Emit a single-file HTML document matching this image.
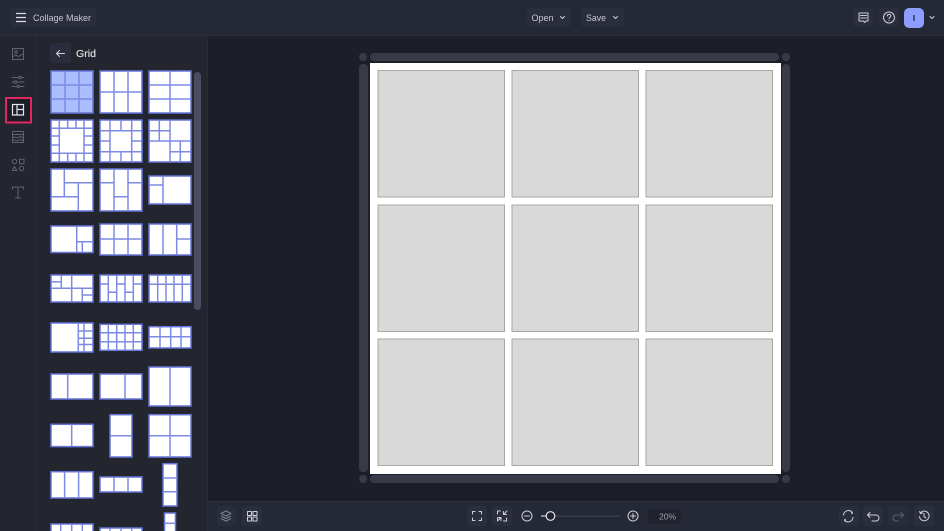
<!DOCTYPE html>
<html><head><meta charset="utf-8"><style>
html,body{margin:0;padding:0;width:944px;height:531px;overflow:hidden;background:#1d1e29}
svg{position:absolute;left:0;top:0;display:block}
text{font-family:"Liberation Sans",sans-serif}
.t rect{fill:#fff;stroke:#6674d8;stroke-width:1.5}
.t path{fill:none;stroke:#7d8ae2;stroke-width:1.5}
.i{fill:none;stroke:#5f6272;stroke-width:1;stroke-linecap:round;stroke-linejoin:round}
.w{fill:none;stroke:#cfd1d8;stroke-width:1;stroke-linecap:round;stroke-linejoin:round}
</style></head><body>
<svg width="944" height="531" viewBox="0 0 944 531">
<!-- backgrounds -->
<rect x="0" y="0" width="944" height="531" fill="#1d1e29"/>
<rect x="0" y="36" width="207" height="495" fill="#23262f"/>
<rect x="35" y="36" width="1" height="495" fill="#2a2d38"/>
<rect x="207" y="36" width="1" height="495" fill="#292c37"/>
<rect x="0" y="0" width="944" height="36" fill="#252835"/>
<rect x="0" y="35" width="944" height="1" fill="#2a2d3a"/>
<rect x="208" y="501" width="736" height="30" fill="#252835"/>
<rect x="208" y="501" width="736" height="1" fill="#32353f"/>

<!-- top bar -->
<rect x="10" y="8" width="86" height="19" rx="3" fill="#2a2d3b"/>
<path d="M16 13.500h10M16 17.500h10M16 21.500h10" fill="none" stroke="#dcdee4" stroke-width="1.200"/>
<text x="33" y="21" font-size="9.500" fill="#c6c8cf" textLength="58" lengthAdjust="spacingAndGlyphs">Collage Maker</text>
<rect x="527" y="8" width="44" height="19" rx="3" fill="#2a2d3b"/>
<text x="531.500" y="21" font-size="9.500" fill="#c6c8cf" textLength="22" lengthAdjust="spacingAndGlyphs">Open</text>
<path d="M560.500 16.500l2 2 2-2" class="w"/>
<rect x="581" y="8" width="43" height="19" rx="3" fill="#2a2d3b"/>
<text x="586" y="21" font-size="9.500" fill="#c6c8cf" textLength="20" lengthAdjust="spacingAndGlyphs">Save</text>
<path d="M613.500 16.500l2 2 2-2" class="w"/>
<rect x="853" y="8" width="20" height="19" rx="3" fill="#2a2d3b"/>
<path d="M859 13h9v8h-2l-1.500 1.500-1-1.500h-4.500zM860.500 15.500h6M860.500 18h6" class="w"/>
<rect x="879" y="8" width="20" height="19" rx="3" fill="#2a2d3b"/>
<circle cx="889" cy="17.500" r="5.500" class="w"/>
<path d="M887.300 16c0-2.200 3.500-2.200 3.500 0 0 1.300-1.800 1.300-1.800 2.700M889 20.500v.1" class="w"/>
<rect x="904" y="8" width="20" height="20" rx="5" fill="#8c9eff"/>
<rect x="913.400" y="15" width="1.200" height="6" fill="#1d2030"/>
<path d="M930 16.500l2 2 2-2" class="w"/>

<!-- sidebar icons -->
<g class="i">
<rect x="12.500" y="48.500" width="11" height="11"/>
<circle cx="16" cy="52" r="1.200"/><path d="M12.500 57l3-2 3 1.500 5-3"/>
<path d="M12 77.500h12M12 82h12M12 86.500h12"/><circle cx="20" cy="77.500" r="1.300" fill="#23262f"/><circle cx="15.500" cy="82" r="1.300" fill="#23262f"/><circle cx="18.500" cy="86.500" r="1.300" fill="#23262f"/>
<rect x="12.500" y="131.500" width="11" height="11"/><path d="M12.500 134.500h11M12.500 137.500c2-1.500 4 1 5.500 0s3-1 5.500 0M12.500 140.500c2-1.500 4 1 5.500 0s3-1 5.500 0"/>
<circle cx="14.500" cy="161.500" r="2.200"/><rect x="19.500" y="159.300" width="4.500" height="4.500"/><path d="M14.500 166.500l2.300 4h-4.600z"/><circle cx="21.500" cy="168.500" r="2.200"/>
<path d="M12.500 189v-2h11v2M18 187v11M15.500 198h5"/>
</g>
<rect x="6" y="98" width="25" height="24.500" fill="#1c1d27" stroke="#e2265f" stroke-width="2"/>
<path d="M12.500 104.500h11v10.500h-11zM17 104.500v10.500M17 109.500h6.500" fill="none" stroke="#e4e6ec" stroke-width="1.200"/>

<!-- panel header -->
<rect x="50" y="43" width="21" height="20" rx="3" fill="#2a2d3b"/>
<path d="M56.500 53.500h8M59.500 50.500l-3 3 3 3" class="w"/>
<text x="76" y="57" font-size="10.500" fill="#dcdee4" stroke="#dcdee4" stroke-width="0.200" textLength="20" lengthAdjust="spacingAndGlyphs">Grid</text>
<rect x="194" y="72" width="7" height="238" rx="3.500" fill="#4a4d60"/>

<!-- tiles -->
<g class="t">
<rect x="51" y="71" width="42" height="42" style="fill:#a9bdff"/><path d="M65 71v42M79 71v42M51 85h42M51 99h42"/>
<rect x="100" y="71" width="42" height="42"/><path d="M114 71v42M128 71v42M100 92h42"/>
<rect x="149" y="71" width="42" height="42"/><path d="M170 71v42M149 85h42M149 99h42"/>

<rect x="51" y="120" width="42" height="42"/><path d="M59.300 120v42M84 120v42M67.700 120v8.300M76 120v8.300M67.700 153.300v8.700M76 153.300v8.700M51 128.300h42M51 153.300h42M51 136h8.300M51 145h8.300M84 136h9M84 145h9"/>
<rect x="100" y="120" width="42" height="42"/><path d="M110 120v42M121 120v10.700M131.700 120v42M121 151.700v10.300M100 130.700h42M100 151.700h42M100 141h10M131.700 141h10.300"/>
<rect x="149" y="120" width="42" height="42"/><path d="M159.300 120v21M170 120v42M149 130.700h21M149 141h42M180.300 141v21M170 151.700h21"/>

<rect x="51" y="169" width="42" height="42"/><path d="M64.300 169v27.700M64.300 182.700h28.700M78.300 182.700v28.300M51 196.700h27.300"/>
<rect x="100" y="169" width="42" height="42"/><path d="M114 169v42M128 169v42M100 182.700h14M114 196.700h14M128 182.700h14"/>
<rect x="149" y="176" width="42" height="28"/><path d="M163 176v28M149 185h14"/>

<rect x="51" y="226" width="42" height="26.500"/><path d="M76.700 226v26.500M76.700 241.700h16.300M82.300 241.700v10.800"/>
<rect x="100" y="224" width="42" height="31"/><path d="M114 224v31M128 224v31M100 239h42"/>
<rect x="149" y="224" width="42" height="31"/><path d="M163 224v31M176.700 224v31M176.700 239h14.300"/>

<rect x="51" y="275" width="42" height="27"/><path d="M61.300 275v13.300M71.700 275v27M51 281.700h10.300M51 288.300h42M82.300 288.300v13.700M82.300 295h10.700"/>
<rect x="100" y="275" width="42" height="27"/><path d="M108.300 275v27M116.700 275v27M125 275v27M133.300 275v27M100 284h8.300M108.300 292.300h8.400M125 292.300h8.300M133.300 284h8.700M116.700 284h8.300"/>
<rect x="149" y="275" width="42" height="27"/><path d="M157.700 275v27M166 275v27M174 275v27M182.300 275v27M149 284.300h42"/>

<rect x="51" y="323" width="42" height="29"/><path d="M78.300 323v29M84 323v29M78.300 331h14.700M78.300 338.300h14.700M78.300 344.500h14.700"/>
<rect x="100" y="324.300" width="42" height="26"/><path d="M108.300 324.300v26M116.700 324.300v26M125 324.300v26M133.300 324.300v26M100 332.700h42M100 341.700h42"/>
<rect x="149" y="326.700" width="42" height="21.300"/><path d="M160 326.700v21.300M170.700 326.700v21.300M181 326.700v21.300M149 336.700h42"/>

<rect x="51" y="374" width="42" height="25"/><path d="M67.700 374v25"/>
<rect x="100" y="374" width="42" height="25"/><path d="M125 374v25"/>
<rect x="149" y="367" width="42" height="39"/><path d="M170 367v39"/>

<rect x="51" y="424.300" width="42" height="22.300"/><path d="M71.700 424.300v22.300"/>
<rect x="110" y="414.700" width="22" height="42.300"/><path d="M110 435.700h22"/>
<rect x="149" y="414.700" width="42" height="42.300"/><path d="M170 414.700v42.300M149 435.700h42"/>

<rect x="51" y="471.700" width="42" height="26.300"/><path d="M64.600 471.700v26.300M78.600 471.700v26.300"/>
<rect x="100" y="477" width="42" height="15"/><path d="M114 477v15M128 477v15"/>
<rect x="163" y="463.700" width="14" height="42.300"/><path d="M163 478h14M163 491.700h14"/>

<rect x="51" y="524" width="42" height="20"/><path d="M60.700 524v20M71.700 524v20M82.300 524v20"/>
<rect x="100" y="528" width="42" height="16"/><path d="M110 528v16M121 528v16M131.700 528v16"/>
<rect x="164.500" y="513" width="11" height="30"/><path d="M164.500 523.300h11"/>
</g>

<!-- canvas handles -->
<g fill="#383a47">
<rect x="370" y="53" width="409" height="8" rx="4"/>
<rect x="370" y="475" width="409" height="8" rx="4"/>
<rect x="359" y="64" width="9" height="408" rx="4"/>
<rect x="782" y="64" width="8" height="408" rx="4"/>
<circle cx="363" cy="57" r="4"/><circle cx="786" cy="57" r="4"/><circle cx="363" cy="479" r="4"/><circle cx="786" cy="479" r="4"/>
</g>
<rect x="370" y="63" width="411" height="411" fill="#fff"/>
<g fill="#d9d9d9" stroke="#a6a6a6" stroke-width="1">
<rect x="378" y="70.500" width="126.500" height="126.500"/><rect x="512" y="70.500" width="126.500" height="126.500"/><rect x="646" y="70.500" width="126.500" height="126.500"/>
<rect x="378" y="205" width="126.500" height="126.500"/><rect x="512" y="205" width="126.500" height="126.500"/><rect x="646" y="205" width="126.500" height="126.500"/>
<rect x="378" y="339" width="126.500" height="126.500"/><rect x="512" y="339" width="126.500" height="126.500"/><rect x="646" y="339" width="126.500" height="126.500"/>
</g>

<!-- bottom bar -->
<rect x="217" y="506" width="19" height="20" rx="3" fill="#2a2d3a"/>
<path d="M226 511l5 2.500-5 2.500-5-2.500zM221 516l5 2.500 5-2.500M221 518.500l5 2.500 5-2.500" fill="none" stroke="#7c7f8c" stroke-width="1" stroke-linejoin="round"/>
<rect x="242" y="506" width="20" height="20" rx="3" fill="#2b2e3c"/>
<path d="M247.500 511.500h4v4h-4zM253 511.500h4v4h-4zM247.500 517h4v4h-4zM253 517h4v4h-4z" class="w"/>
<rect x="467" y="506" width="20" height="20" rx="3" fill="#2b2e3c"/>
<path d="M472.500 514v-2.500h2.500M479 511.500h2.500v2.500M481.500 518v2.500H479M475 520.500h-2.500V518" class="w"/>
<rect x="492" y="506" width="20" height="20" rx="3" fill="#2b2e3c"/>
<path d="M497.500 514v-3h3M497.500 518v3M507 511l-3.500 3.500M503.500 511.500v3h3M497.500 521l3.500-3.500M501 520.500v-3h-3M506.500 518v3h-3" class="w"/>
<circle cx="527" cy="516" r="5" class="w"/><path d="M524.500 516h5" class="w"/>
<path d="M541 516h5" stroke="#d4d6dc" stroke-width="1.200"/>
<rect x="555" y="515.700" width="65" height="1" fill="#44475a"/>
<circle cx="550.500" cy="516" r="4.300" fill="#23262f" stroke="#e4e6ec" stroke-width="1.200"/>
<circle cx="633" cy="516" r="5" class="w"/><path d="M630.500 516h5M633 513.500v5" class="w"/>
<rect x="648" y="509" width="33" height="15" fill="#21232e"/>
<text x="659" y="519.500" font-size="8.500" fill="#a0a2ac">20%</text>
<rect x="839" y="506" width="20" height="20" rx="3" fill="#2b2e3c"/>
<path d="M843.500 515a5 5 0 0 1 8.500-3M853 517.500a5 5 0 0 1-8.500 3" class="w"/>
<circle cx="852" cy="513" r="1" fill="#cfd1d8"/><circle cx="845" cy="520" r="1" fill="#cfd1d8"/>
<rect x="863" y="506" width="20" height="20" rx="3" fill="#2b2e3c"/>
<path d="M867.500 515h8.500a3 3 0 0 1 0 6h-4M870 512.500l-2.500 2.500 2.500 2.500" class="w"/>
<rect x="888" y="506" width="20" height="20" rx="3" fill="#292c39"/>
<path d="M903.500 515h-7.500a3 3 0 0 0 0 6h2M901 512.500l2.500 2.500-2.500 2.500" fill="none" stroke="#5c5f6c" stroke-width="1" stroke-linecap="round" stroke-linejoin="round"/>
<rect x="914" y="506" width="20" height="20" rx="3" fill="#2b2e3c"/>
<path d="M920.500 513a4.800 4.800 0 1 1-1 3.500M919.500 511.500l1 2 2-.5M924 513.500v3l2 1.500" class="w"/>
</svg>
</body></html>
